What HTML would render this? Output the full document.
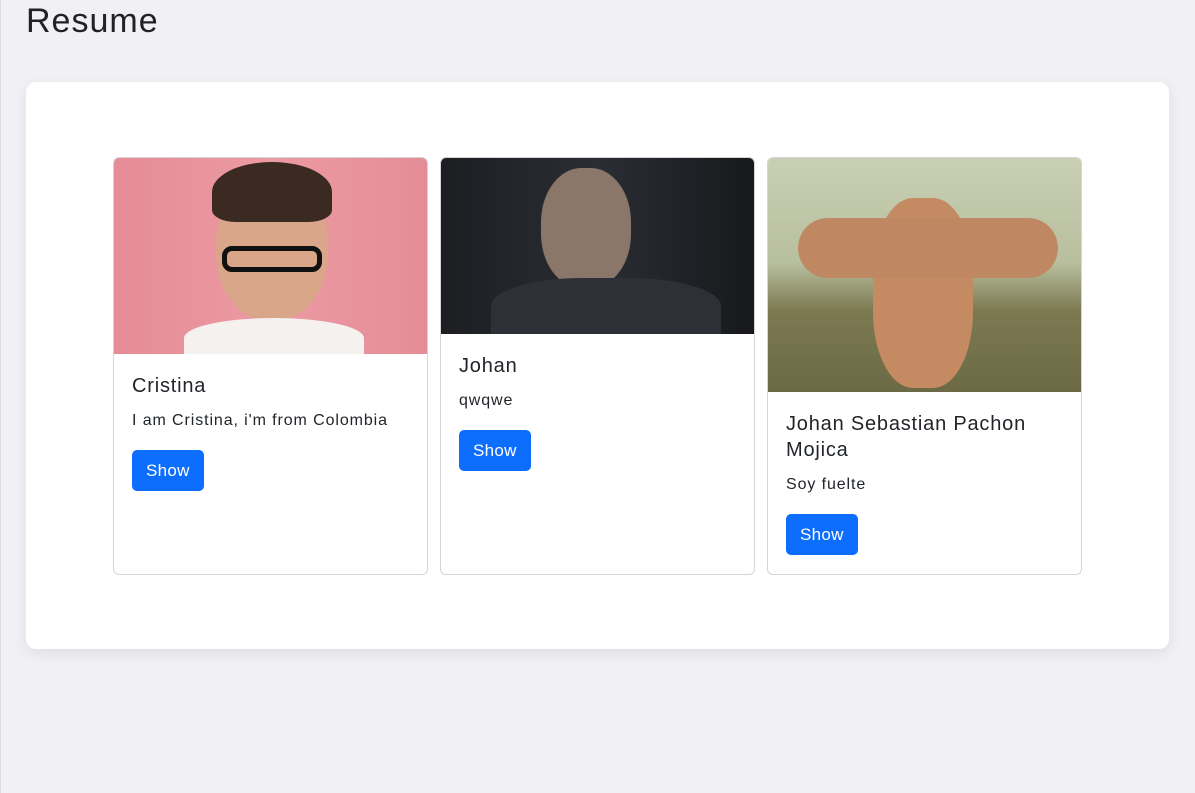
<!DOCTYPE html>
<html><head><meta charset="utf-8"><style>
*{box-sizing:border-box;margin:0;padding:0}
body{width:1195px;height:793px;background:#f0f0f5;font-family:"Liberation Sans",sans-serif;color:#212529;position:relative;overflow:hidden}
.edge{position:absolute;left:0;top:0;width:1px;height:793px;background:#ddd}
h1{position:absolute;left:26px;top:2px;font-size:34px;font-weight:500;color:#222;letter-spacing:1px}
.panel{position:absolute;left:26px;top:82px;width:1143px;height:567px;background:#fff;border-radius:10px;box-shadow:0 4px 14px rgba(0,0,0,.08)}
.card{position:absolute;top:157px;width:315px;height:418px;border:1px solid #d5d5d8;border-radius:6px;overflow:hidden;background:#fff}
.img{width:100%;position:relative;overflow:hidden}
.body{padding:18px}
.t{font-size:20px;font-weight:500;line-height:26px;margin-top:1px;letter-spacing:.8px}
.p{font-size:16px;margin-top:12px;line-height:20px;letter-spacing:.9px}
.btn{display:inline-block;margin-top:19px;background:#0d6efd;color:#fff;font-size:17px;padding:10px 14px;border-radius:5px;line-height:21px;letter-spacing:.3px}
</style></head><body>
<div class="edge"></div>
<h1>Resume</h1>
<div class="panel"></div>
<div class="card" style="left:113px">
 <div class="img" style="height:196px;background:linear-gradient(90deg,#e58c96,#ec9aa3 50%,#e48d97)">
  <div style="position:absolute;left:102px;top:12px;width:112px;height:150px;border-radius:50% 50% 45% 45%;background:#d9a68a"></div>
  <div style="position:absolute;left:98px;top:4px;width:120px;height:60px;border-radius:50% 50% 20% 20%;background:#3a2a22"></div>
  <div style="position:absolute;left:70px;top:160px;width:180px;height:40px;border-radius:50% 50% 0 0;background:#f4f1ee"></div>
  <div style="position:absolute;left:108px;top:88px;width:100px;height:26px;border:5px solid #111;border-radius:10px"></div>
 </div>
 <div class="body"><div class="t">Cristina</div><div class="p">I am Cristina, i'm from Colombia</div><div class="btn">Show</div></div>
</div>
<div class="card" style="left:440px">
 <div class="img" style="height:176px;background:linear-gradient(90deg,#1c1e22,#2a2d33 50%,#17191c)">
  <div style="position:absolute;left:100px;top:10px;width:90px;height:120px;border-radius:45%;background:#8a776a"></div>
  <div style="position:absolute;left:50px;top:120px;width:230px;height:70px;border-radius:40% 40% 0 0;background:#2d3036"></div>
 </div>
 <div class="body"><div class="t">Johan</div><div class="p">qwqwe</div><div class="btn">Show</div></div>
</div>
<div class="card" style="left:767px">
 <div class="img" style="height:234px;background:linear-gradient(180deg,#c9cfb4,#b8bf9e 45%,#7d7a52 65%,#6b6a45)">
  <div style="position:absolute;left:105px;top:40px;width:100px;height:190px;border-radius:40%;background:#c48a62"></div>
  <div style="position:absolute;left:30px;top:60px;width:260px;height:60px;border-radius:30px;background:#c08763"></div>
 </div>
 <div class="body"><div class="t">Johan Sebastian Pachon Mojica</div><div class="p">Soy fuelte</div><div class="btn">Show</div></div>
</div>
</body></html>
